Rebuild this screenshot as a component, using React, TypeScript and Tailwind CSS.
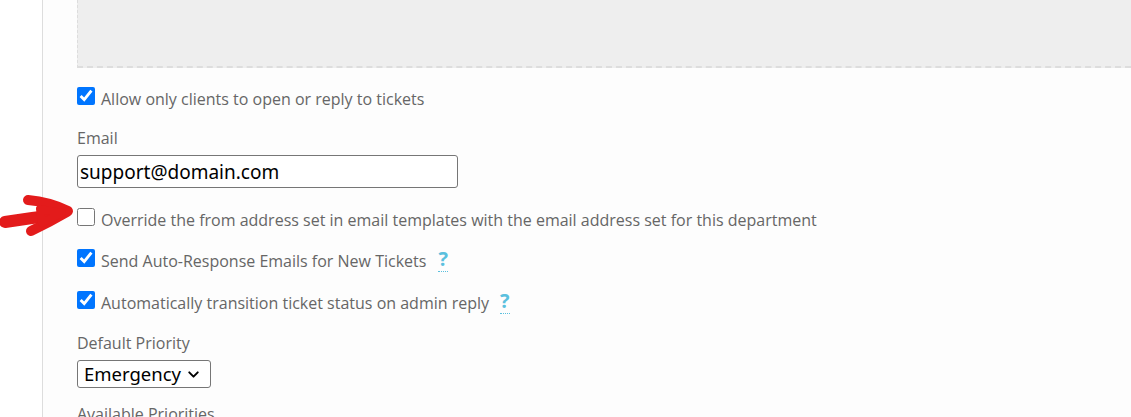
import { ChevronDown } from 'lucide-react';

function Check({ checked }: { checked: boolean }) {
  return (
    <input
      type="checkbox"
      defaultChecked={checked}
      className="m-0 h-[18px] w-[18px] shrink-0 accent-[#0075ff]"
    />
  );
}

function Help({ offset }: { offset: string }) {
  return (
    <span
      className={`${offset} -mt-[2px] cursor-help self-start border-b border-dotted border-[#5bc0de] text-[20px] font-bold leading-[24px] text-[#5bc0de]`}
    >
      ?
    </span>
  );
}

function CheckRow({ label, checked, help, className }: { label: string; checked: boolean; help?: string; className: string }) {
  return (
    <label className={`flex items-start ${className}`}>
      <Check checked={checked} />
      <span className="ml-[6px] whitespace-nowrap text-[16px] leading-[24px] text-[#666]">{label}</span>
      {help && <Help offset={help} />}
    </label>
  );
}

function Arrow() {
  return (
    <svg className="absolute left-0 top-[190px]" width="76" height="52" viewBox="0 190 76 52">
      <g fill="none" stroke="#e31b1b" strokeLinecap="round" strokeLinejoin="round">
        <path d="M28 200 Q50 202 68 211" strokeWidth="10" />
        <path d="M5 222 Q30 218 56 215" strokeWidth="12" />
        <path d="M67 212 Q50 222 31 231" strokeWidth="10" />
        <path d="M40 209 L62 213 L42 223 Z" strokeWidth="8" fill="#e31b1b" />
      </g>
    </svg>
  );
}

export default function App() {
  return (
    <div className="relative flex h-[417px] w-full overflow-hidden bg-white font-['Open_Sans',sans-serif]">
      <div className="w-[43px] shrink-0 border-r border-[#ddd] bg-white" />
      <div className="flex-1 bg-[#fdfdfd] pl-[34px]">
        <div className="h-[68px] border-b-2 border-l border-dashed border-[#ddd] border-l-[#ddd] bg-[#eee]" />

        <CheckRow className="mt-[19px]" checked label="Allow only clients to open or reply to tickets" />

        <div className="mt-[15px] text-[16px] leading-[24px] text-[#666]">Email</div>
        <input
          type="text"
          defaultValue="support@domain.com"
          className="mt-[5px] box-border h-[33px] w-[381px] rounded-[3px] border border-[#767676] bg-white px-[2px] font-['Noto_Sans',sans-serif] text-[19px] text-black outline-none"
        />

        <CheckRow className="mt-[20px]" checked={false} label="Override the from address set in email templates with the email address set for this department" />
        <CheckRow className="mt-[17px]" checked help="ml-[12px]" label="Send Auto-Response Emails for New Tickets" />
        <CheckRow className="mt-[18px]" checked help="ml-[11px]" label="Automatically transition ticket status on admin reply" />

        <div className="mt-[16px] text-[16px] leading-[24px] text-[#666]">Default Priority</div>
        <div className="relative mt-[5px] flex h-[28px] w-[134px] items-center rounded-[3px] border border-[#767676] bg-white pl-[6px] font-['Noto_Sans',sans-serif] text-[18.5px] text-black">
          Emergency
          <ChevronDown className="absolute right-[8px] top-[5px] h-[17px] w-[17px]" strokeWidth={2.75} />
        </div>

        <div className="mt-[14px] text-[16px] leading-[24px] text-[#666]">Available Priorities</div>
      </div>
      <Arrow />
    </div>
  );
}
